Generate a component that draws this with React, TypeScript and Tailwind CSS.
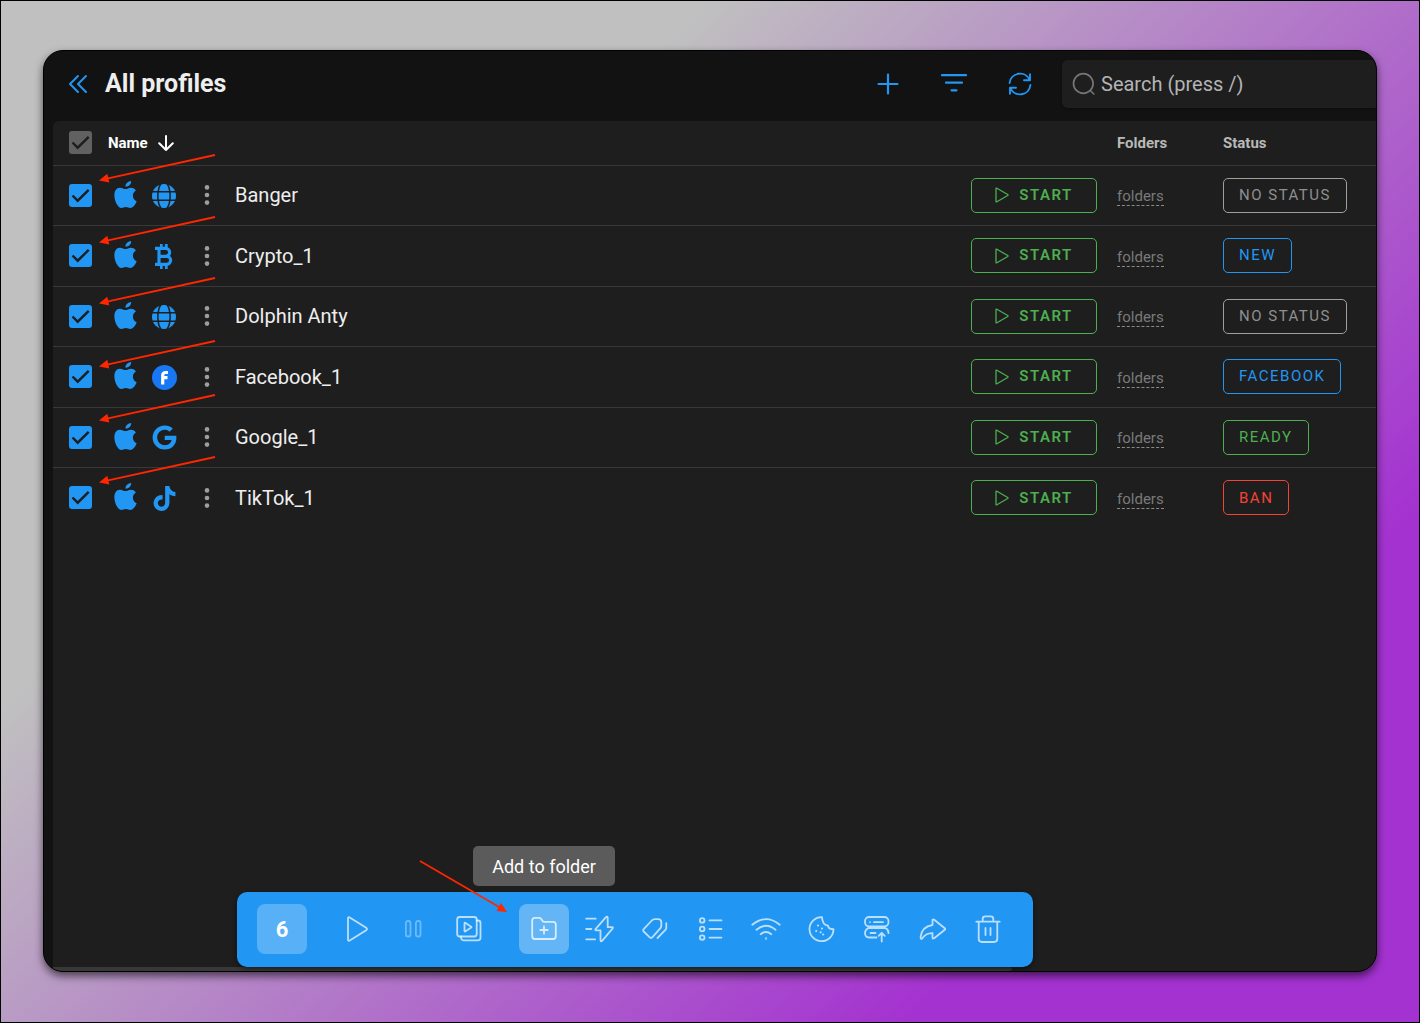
import React from "react";
import { FaGoogle, FaTiktok } from "react-icons/fa";

const line = {
  fill: "none",
  stroke: "currentColor",
  strokeLinecap: "round" as const,
  strokeLinejoin: "round" as const,
};

function AppleIcon() {
  return (
    <svg viewBox="0 0 66 80" className="h-[27px] w-[23px] -translate-y-px" fill="currentColor" aria-hidden="true">
      <path d="M33 24C28 24 24 20 16 20 6 20 0 30 0 42c0 18 11 38 21 38 5 0 7-3 13-3s8 3 13 3c9 0 17-13 19-20-8-4-11-9-11-17 0-7 3-11 9-15-4-6-10-8-15-8-7 0-11 4-16 4Z" />
      <path d="M33 17C32 8 40 1 50 0c0 9-7 17-17 17Z" />
    </svg>
  );
}

function GlobeIcon() {
  return (
    <svg viewBox="0 0 24 24" className="size-6" aria-hidden="true">
      <circle cx="12" cy="12" r="12" fill="currentColor" />
      <g fill="none" stroke="#1e1e1e" strokeWidth="1.500">
        <path d="M0 7.700h24M0 16.200h24" />
        <path d="M9 -.5C4.800 6 4.800 18 9 24.500M15 -.5c4.200 6.500 4.200 18.500 0 25" />
      </g>
    </svg>
  );
}

function BitcoinIcon() {
  return (
    <svg viewBox="0 0 54 75" className="h-[25px] w-[18px]" fill="none" stroke="currentColor" aria-hidden="true">
      <path strokeWidth="9.500" d="M0 13h32a12 12 0 0 1 0 24H14M12 14v47M0 61h35a12 12 0 0 0 0-24" />
      <path strokeWidth="8" d="M19 0v12M34 0v12M19 63v12M34 63v12" />
    </svg>
  );
}

function FacebookIcon() {
  return (
    <svg viewBox="0 0 25 25" className="size-[25px]" aria-hidden="true">
      <circle cx="12.500" cy="12.500" r="12.500" fill="#1877f2" />
      <path d="M10.700 19.500V10.500q0-3 3-3h2.300M10.700 12.600h4.800" fill="none" stroke="#fff" strokeWidth="3.200" />
    </svg>
  );
}

function DotsIcon() {
  return (
    <svg viewBox="0 0 6 20" className="h-5 w-1.5" fill="currentColor" aria-hidden="true">
      <circle cx="3" cy="2.400" r="2.300" />
      <circle cx="3" cy="10" r="2.300" />
      <circle cx="3" cy="17.600" r="2.300" />
    </svg>
  );
}

function Tool({ children }: { children: React.ReactNode }) {
  return (
    <svg viewBox="0 0 30 30" className="size-[30px]" {...line} strokeWidth="1.800" aria-hidden="true">
      {children}
    </svg>
  );
}

const runTools = [
  { label: "Start", icon: <Tool><path d="M6 4.500v21q0 2 1.700 1l16.500-10.300q1.600-1.200 0-2.400L7.700 3.500q-1.700-1-1.700 1Z" /></Tool> },
  { label: "Pause", dim: true, icon: <Tool><rect x="7.900" y="7" width="4.600" height="15.500" rx="2" /><rect x="17.900" y="7" width="4.600" height="15.500" rx="2" /></Tool> },
  {
    label: "Run scenario",
    icon: (
      <Tool>
        <rect x="3.200" y="3" width="19.500" height="19.500" rx="2.500" />
        <path d="M22.700 6.500h1.300q2.500 0 2.500 2.500v14.800q0 2.500-2.500 2.500H9.500q-2.200 0-2.400-2.500V22.500M10.500 9.200v7.800q0 .8.700.4l6-3.800q.6-.5 0-.9l-6-3.900q-.7-.4-.7.4Z" />
      </Tool>
    ),
  },
];

const editTools = [
  { label: "Add to folder", active: true, icon: <Tool><path d="M3.200 6.500q0-2.700 2.700-2.700h4.300q1.200 0 1.900 1l1.500 2.200q.6.900 1.700.9h8.900q2.600 0 2.600 2.700v11.700q0 2.700-2.600 2.700H5.900q-2.700 0-2.700-2.700ZM15 12.300v7.400M11.300 16h7.400" /></Tool> },
  { label: "Quick actions", icon: <Tool><path d="M1.200 4.700h9.500M1.200 15h5.200M1.200 25.300h9M21 3.200 10.500 15.200q-.8 1.200.8 1.200h4.200v9.800q.2 2 1.600.7l10.600-12.500q.7-1.200-.7-1.200h-4.300V3.600q-.4-1.600-1.700-.4Z" /></Tool> },
  { label: "Tags", icon: <Tool><path d="M3.700 15.200 11.800 6.500q1.300-1.300 3-1.300h3.300q3.200 0 3.200 3v3.500q0 1.500-1.100 2.700L12.500 23.200q-1.500 1.500-3 0l-5.800-5.700q-1.200-1.200 0-2.300ZM26.300 9.200v4.500q0 1.300-.9 2.200L17.500 24" /></Tool> },
  { label: "Statuses", icon: <Tool><circle cx="6.200" cy="6.400" r="2.300" /><circle cx="6.200" cy="15" r="2.300" /><circle cx="6.200" cy="23.600" r="2.300" /><path d="M13.500 6.400h12M13.500 15h12M13.500 23.600h12" /></Tool> },
  { label: "Proxy", icon: <Tool><path d="M1.300 10.800q13.700-11.300 27.400 0M5.500 15.800q9.500-8 19 0M9.700 20.200q5.300-4.500 10.600 0" /><circle cx="15" cy="24.500" r=".3" /></Tool> },
  {
    label: "Cookies",
    icon: (
      <Tool>
        <path d="M15 3.200A12 12 0 1 0 26.500 15.200q-5 .4-5.500-3.500-5.500-.7-6-8.500Z" />
        <path strokeWidth="2.200" d="M11 11.500h.01M9.200 17h.01M13.700 18.300h.01M15 14.500h.01M16.200 20.500h.01" />
      </Tool>
    ),
  },
  { label: "Change server", icon: <Tool><rect x="3" y="3" width="23.500" height="9.500" rx="4.200" /><path d="M8 8.200h.01M12 8.200h9M14.500 23.500H7.200Q3 23.500 3 19q0-3 3-4.800h17.500q3 1.300 3 5M8.500 19h5M19.700 27.500v-8M16.700 21.800l3-3 3 3" /></Tool> },
  { label: "Transfer", icon: <Tool><path d="M14.500 5.800q.6-1 1.700 0l10.600 8.400q1 .8 0 1.600l-10.600 8.500q-1.700.8-1.700-.9v-4.200q-6.800-.2-10.500 5.600-1.600.3-1.400-1.600 1.200-10.700 11.900-12.200Z" /></Tool> },
  { label: "Delete", icon: <Tool><path d="M3.300 7.700h23.400M9.700 7.500V4.800q0-2.500 2.500-2.500h5.600q2.500 0 2.500 2.500v2.700M5.700 8v16.800q0 3.200 3.200 3.200h12.200q3.200 0 3.200-3.200V8M12.500 14v7M17.500 14v7" /></Tool> },
];

type Row = { name: string; icon: React.ReactNode; status: string; tone: string };

const rows: Row[] = [
  { name: "Banger", icon: <GlobeIcon />, status: "NO STATUS", tone: "border-[#9e9e9e] text-[#8f8f8f]" },
  { name: "Crypto_1", icon: <BitcoinIcon />, status: "NEW", tone: "border-[#2196f3] text-[#2196f3]" },
  { name: "Dolphin Anty", icon: <GlobeIcon />, status: "NO STATUS", tone: "border-[#9e9e9e] text-[#8f8f8f]" },
  { name: "Facebook_1", icon: <FacebookIcon />, status: "FACEBOOK", tone: "border-[#2196f3] text-[#2196f3]" },
  { name: "Google_1", icon: <FaGoogle size={25} />, status: "READY", tone: "border-[#4caf50] text-[#4caf50]" },
  { name: "TikTok_1", icon: <FaTiktok size={25} />, status: "BAN", tone: "border-[#f44336] text-[#f44336]" },
];

function Check({ label, muted = false }: { label: string; muted?: boolean }) {
  return (
    <label className="grid size-[23px]">
      <input
        type="checkbox"
        defaultChecked
        aria-label={label}
        className={
          muted
            ? "col-start-1 row-start-1 size-[23px] appearance-none rounded-[3px] bg-[#616161]"
            : "col-start-1 row-start-1 size-[23px] appearance-none rounded-[3px] bg-[#2196f3]"
        }
      />
      <svg viewBox="0 0 23 23" className="pointer-events-none z-10 col-start-1 row-start-1 size-[23px]" fill="none" stroke="#1e1e1e" strokeWidth="2.400" aria-hidden="true">
        <path d="m3.500 11.500 5.200 5.200L19.700 5.900" />
      </svg>
    </label>
  );
}

const pointerStarts = [155, 217, 278, 341, 395, 457];

function Pointers() {
  return (
    <svg className="pointer-events-none absolute top-[-51px] left-[-44px] z-20 h-[500px] w-[240px]" viewBox="0 0 240 500" aria-hidden="true">
      {pointerStarts.map((y) => (
        <g key={y} transform={`translate(100 ${y})`}>
          <path d="M115 0 7 23.600" stroke="#ff2600" strokeWidth="1.800" />
          <path d="m-1 25.500 8.300-6.700 2 8.600Z" fill="#ff2600" />
        </g>
      ))}
    </svg>
  );
}

function HeaderButton({ label, children }: { label: string; children: React.ReactNode }) {
  return (
    <button type="button" aria-label={label} className="flex size-8 items-center justify-center text-[#2196f3]">
      <svg viewBox="0 0 28 28" className="size-7 shrink-0" {...line} strokeWidth="2.200" aria-hidden="true">
        {children}
      </svg>
    </button>
  );
}

function ToolButton({ label, icon, active, dim }: { label: string; icon: React.ReactNode; active?: boolean; dim?: boolean }) {
  const base = "relative flex size-[50px] items-center justify-center rounded-lg ";
  return (
    <button
      type="button"
      aria-label={label}
      className={base + (active ? "bg-white/30 text-white/75" : dim ? "text-white/35" : "text-white/70")}
    >
      {icon}
      {active && (
        <span role="tooltip" className="absolute bottom-[68px] left-1/2 flex h-10 w-[142px] -translate-x-1/2 items-center justify-center rounded-[5px] bg-[#5b5b5b] text-[18px] whitespace-nowrap text-white">
          {label}
        </span>
      )}
    </button>
  );
}

export default function App() {
  return (
    <div className="flex min-h-screen flex-col border border-black bg-[linear-gradient(135deg,#c0c0c0_29%,#a432d0_79%)] px-[42px] pt-[49px] pb-[50px] font-[Roboto,sans-serif] text-white">
      <main className="relative flex flex-1 flex-col overflow-hidden rounded-[20px] border border-black bg-[#121212] pl-[9px] shadow-[0_4px_8px_rgba(0,0,0,0.6)]">
        <Pointers />
        <header className="flex h-[70px] items-center pb-1">
          <button type="button" aria-label="Collapse" className="ml-[15px] text-[#2196f3]">
            <svg viewBox="0 0 22 20" className="h-5 w-[22px]" {...line} strokeWidth="2" aria-hidden="true">
              <path d="M10 2 2 10l8 8M18 2l-8 8 8 8" />
            </svg>
          </button>
          <h1 className="ml-[15px] text-[25px] leading-8 font-bold text-[#eeeeee]">All profiles</h1>
          <div className="mr-[26px] ml-auto flex gap-[34px]">
            <HeaderButton label="Add profile">
              <path d="M14 4.500v19M4.500 14h19" />
            </HeaderButton>
            <HeaderButton label="Filter">
              <path d="M2 5.200h24M6 12.700h16M11.500 20.300h5" />
            </HeaderButton>
            <HeaderButton label="Refresh">
              <path strokeWidth="1.900" d="M3.600 13A10.500 10.500 0 0 1 23.500 9.600M24 4.200v6h-6M24.400 15A10.500 10.500 0 0 1 4.500 18.400M4 23.800v-6h6" />
            </HeaderButton>
          </div>
          <label className="flex h-12 w-[314px] items-center rounded-l-md bg-[#1e1e1e] pl-2.5 shadow-[0_1px_3px_rgba(0,0,0,0.4)]">
            <svg viewBox="0 0 24 24" className="size-6 shrink-0 text-[#757575]" {...line} strokeWidth="1.700" aria-hidden="true">
              <circle cx="11.300" cy="11.500" r="9.800" />
              <path d="m18.800 19 3 3" />
            </svg>
            <input
              type="search"
              aria-label="Search"
              placeholder="Search (press /)"
              className="ml-[5px] min-w-0 flex-1 bg-transparent text-[20px] outline-none placeholder:text-[#b4b4b4]"
            />
          </label>
        </header>
        <section className="flex flex-1 flex-col rounded-tl-md bg-[#1e1e1e]">
          <table className="w-full table-fixed border-collapse text-left">
            <colgroup>
              <col className="w-[55px]" />
              <col />
              <col className="w-[146px]" />
              <col className="w-[106px]" />
              <col className="w-[153px]" />
            </colgroup>
            <thead>
              <tr className="h-11 border-b border-[#383838] text-[15px]">
                <th className="p-0 pl-4">
                  <Check label="Select all profiles" muted />
                </th>
                <th className="p-0">
                  <button type="button" className="flex items-center gap-2.5 font-bold">
                    Name
                    <svg viewBox="0 0 16 16" className="size-4" {...line} strokeWidth="2" aria-hidden="true">
                      <path d="M8 1v14M1.200 8.200 8 15l6.800-6.800" />
                    </svg>
                  </button>
                </th>
                <th className="p-0" aria-label="Launch" />
                <th className="p-0 font-bold text-[#b8b8b8]">Folders</th>
                <th className="p-0 font-bold text-[#b8b8b8]">Status</th>
              </tr>
            </thead>
            <tbody>
              {rows.map((row) => (
                <tr key={row.name} className="h-[60px] border-b border-[#383838] last:border-b-0 even:h-[61px]">
                  <td className="p-0 pl-4">
                    <Check label={`Select ${row.name}`} />
                  </td>
                  <td className="p-0">
                    <div className="flex items-center text-[#2196f3]">
                      <span className="ml-1.5 flex">
                        <AppleIcon />
                      </span>
                      <span className="ml-3.5 flex w-[26px] justify-center pt-px">{row.icon}</span>
                      <button type="button" aria-label={`Actions for ${row.name}`} className="ml-[27px] text-[#9e9e9e]">
                        <DotsIcon />
                      </button>
                      <span className="ml-[25px] text-[20px] leading-6 text-[#eeeeee]">{row.name}</span>
                    </div>
                  </td>
                  <td className="p-0">
                    <button type="button" className="flex h-[35px] w-[126px] items-center justify-center gap-2.5 rounded-[5px] border border-[#4caf50] text-[15px] font-semibold tracking-[1.5px] text-[#4caf50]">
                      <svg viewBox="0 0 14 16" className="h-4 w-3.5" {...line} strokeWidth="1.300" aria-hidden="true">
                        <path d="M1 1.800v12.400q0 1 .9.500l10.800-6.200q.8-.5 0-1L1.900 1.300Q1 .8 1 1.800Z" />
                      </svg>
                      START
                    </button>
                  </td>
                  <td className="p-0 pt-0.5">
                    <button type="button" className="flex h-5 items-end border-b border-dashed border-[#8a8a8a] text-[15px] leading-[18px] text-[#7a7a7a]">
                      folders
                    </button>
                  </td>
                  <td className="p-0">
                    <button type="button" className={"flex h-[35px] items-center rounded-[5px] border px-[15px] text-[15px] tracking-[1.5px] " + row.tone}>
                      {row.status}
                    </button>
                  </td>
                </tr>
              ))}
            </tbody>
          </table>
          <div role="toolbar" aria-label="Bulk actions" className="relative mt-auto ml-[184px] flex h-[75px] w-[796px] items-center gap-[25px] rounded-[10px] bg-[#2196f3] px-5 pb-px shadow-[0_2px_5px_rgba(0,0,0,0.5)]">
            <span className="flex size-[50px] items-center justify-center rounded-lg bg-white/25 text-[22px] font-bold">6</span>
            <div className="flex w-[162px] justify-between">
              {runTools.map((tool) => (
                <ToolButton key={tool.label} {...tool} />
              ))}
            </div>
            <div className="flex flex-1 justify-between">
              {editTools.map((tool) => (
                <ToolButton key={tool.label} {...tool} />
              ))}
            </div>
            <svg viewBox="0 0 90 54" className="pointer-events-none absolute top-[-32px] left-[182px] h-[54px] w-[90px]" aria-hidden="true">
              <path d="m1 1 80 46.500" stroke="#ff2600" strokeWidth="1.800" />
              <path d="m88 52-10.500-1 4.500-8Z" fill="#ff2600" />
            </svg>
          </div>
          <div className="mr-[364px] h-1 rounded-r-full bg-[#383838]" />
        </section>
      </main>
    </div>
  );
}
